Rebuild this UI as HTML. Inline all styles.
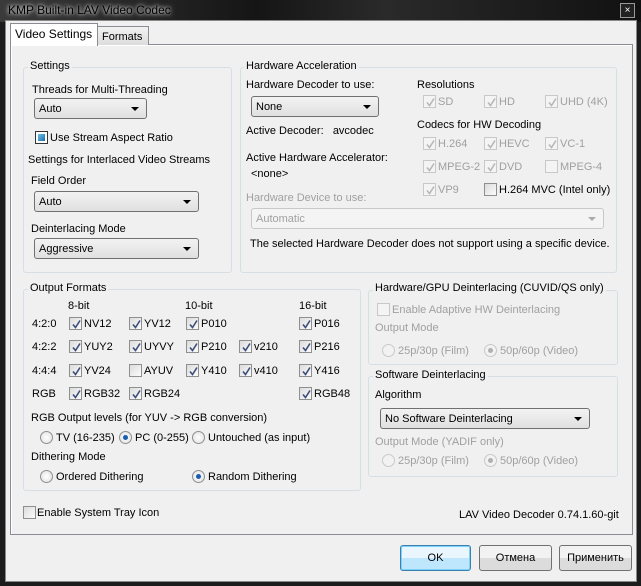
<!DOCTYPE html>
<html><head><meta charset="utf-8"><style>
*{box-sizing:border-box;margin:0;padding:0}
body{width:641px;height:586px;overflow:hidden;background:#1c1c1c;font:11px "Liberation Sans","DejaVu Sans",sans-serif;color:#000;position:relative}
.t{position:absolute;white-space:nowrap;line-height:13px;font-size:11px;margin-top:1px}
.g{color:#a0a0a0}
.box{position:absolute;border:1px solid #d5dfe5;border-radius:3px}
.lg{position:absolute;background:#f0f0f0;padding:0 2px;line-height:13px;font-size:11px;white-space:nowrap;margin-top:0px}
.cb{position:absolute;width:13px;height:13px;border:1px solid #8e8f8f;background:linear-gradient(135deg,#dcdcdc,#fbfbfb)}
.cb.d{border-color:#c8c8c8;background:#f4f4f4}
.cb svg{position:absolute;left:1px;top:1px}
.rb{position:absolute;width:13px;height:13px;border-radius:50%;border:1px solid #8e8f8f;background:radial-gradient(#fff,#dedede)}
.rb.d{border-color:#c8c8c8;background:#f2f2f2}
.rb.on::after{content:"";position:absolute;left:3px;top:3px;width:5px;height:5px;border-radius:50%;background:#1a5db0}
.rb.d.on::after{background:#b0b0b0}
.sel{position:absolute;height:21px;border:1px solid #707070;border-radius:3px;background:linear-gradient(#f2f2f2,#e0e0e0);padding-left:4px;line-height:20px;font-size:11px}
.sel::after{content:"";position:absolute;right:7px;top:8px;border-left:4px solid transparent;border-right:4px solid transparent;border-top:4px solid #000}
.sel.d{border-color:#c8c8c8;background:#f4f4f4;color:#a0a0a0}
.sel.d::after{border-top-color:#aaa}
.btn{position:absolute;height:26px;border:1px solid #707070;border-radius:3px;background:linear-gradient(#f2f2f2 50%,#dcdcdc 50%);text-align:center;line-height:24px;font-size:11px}
</style></head><body>
<div style="position:absolute;left:0;top:0;width:641px;height:22px;background:linear-gradient(90deg,#3a3a3a,#151515 40%,#2a2a2a 60%,#111)"></div>
<div class="t" style="left:8px;top:3px;color:#000;text-shadow:0 0 6px #ddd,0 0 3px #ccc;font-size:12px">KMP Built-in LAV Video Codec</div>
<div style="position:absolute;left:620px;top:3px;width:15px;height:15px;border:1px solid #999;background:#222;color:#fff;font-size:10px;line-height:13px;text-align:center">×</div>
<div style="position:absolute;left:5px;top:20px;width:632px;height:562px;border:1px solid #888;background:#f0f0f0"></div>
<div style="position:absolute;left:10px;top:44px;width:623px;height:491px;border:1px solid #898c95;background:#f0f0f0;box-shadow:inset 1px 1px #fff"></div>
<div style="position:absolute;left:97px;top:26px;width:52px;height:19px;border:1px solid #898c95;border-bottom:none;background:linear-gradient(#f2f2f2,#dcdcdc)"></div>
<div class="t" style="left:102px;top:30px">Formats</div>
<div style="position:absolute;left:10px;top:23px;width:88px;height:23px;border:1px solid #898c95;border-bottom:none;background:#fff"></div>
<div class="t" style="left:15px;top:27px;font-size:12px">Video Settings</div>

<div class="box" style="left:23px;top:67px;width:209px;height:206px"></div>
<div class="lg" style="left:28px;top:60px">Settings</div>
<div class="t" style="left:32px;top:83px">Threads for Multi-Threading</div>
<div class="sel" style="left:34px;top:98px;width:113px">Auto</div>
<div class="cb" style="left:35px;top:131px;border-color:#333;background:#fff"><div style="position:absolute;left:2px;top:2px;width:7px;height:7px;background:linear-gradient(135deg,#6ac0e8,#1f6fa8)"></div></div>
<div class="t" style="left:50px;top:131px">Use Stream Aspect Ratio</div>
<div class="t" style="left:28px;top:153px">Settings for Interlaced Video Streams</div>
<div class="t" style="left:31px;top:174px">Field Order</div>
<div class="sel" style="left:34px;top:191px;width:165px">Auto</div>
<div class="t" style="left:31px;top:222px">Deinterlacing Mode</div>
<div class="sel" style="left:34px;top:238px;width:165px">Aggressive</div>

<div class="box" style="left:240px;top:67px;width:377px;height:206px"></div>
<div class="lg" style="left:244px;top:60px">Hardware Acceleration</div>
<div class="t" style="left:246px;top:78px">Hardware Decoder to use:</div>
<div class="sel" style="left:251px;top:96px;width:128px">None</div>
<div class="t" style="left:246px;top:124px">Active Decoder:&nbsp;&nbsp;&nbsp;avcodec</div>
<div class="t" style="left:246px;top:151px">Active Hardware Accelerator:</div>
<div class="t" style="left:251px;top:167px">&lt;none&gt;</div>
<div class="t g" style="left:246px;top:191px">Hardware Device to use:</div>
<div class="sel d" style="left:251px;top:208px;width:353px">Automatic</div>
<div class="t" style="left:250px;top:237px">The selected Hardware Decoder does not support using a specific device.</div>
<div class="t" style="left:417px;top:78px">Resolutions</div>
<div class="t" style="left:417px;top:118px">Codecs for HW Decoding</div>

<div class="box" style="left:23px;top:289px;width:338px;height:202px"></div>
<div class="lg" style="left:28px;top:282px">Output Formats</div>
<div class="t" style="left:68px;top:299px">8-bit</div>
<div class="t" style="left:185px;top:299px">10-bit</div>
<div class="t" style="left:299px;top:299px">16-bit</div>
<div class="t" style="left:32px;top:317px">4:2:0</div>
<div class="t" style="left:32px;top:340px">4:2:2</div>
<div class="t" style="left:32px;top:364px">4:4:4</div>
<div class="t" style="left:32px;top:387px">RGB</div>
<div class="t" style="left:31px;top:411px">RGB Output levels (for YUV -&gt; RGB conversion)</div>
<div class="t" style="left:31px;top:450px">Dithering Mode</div>

<div class="box" style="left:368px;top:290px;width:250px;height:75px"></div>
<div class="lg" style="left:373px;top:282px">Hardware/GPU Deinterlacing (CUVID/QS only)</div>
<div class="cb d" style="left:377px;top:303px"></div>
<div class="t g" style="left:392px;top:303px">Enable Adaptive HW Deinterlacing</div>
<div class="t g" style="left:375px;top:321px">Output Mode</div>

<div class="box" style="left:368px;top:376px;width:250px;height:101px"></div>
<div class="lg" style="left:373px;top:369px">Software Deinterlacing</div>
<div class="t" style="left:375px;top:388px">Algorithm</div>
<div class="sel" style="left:380px;top:408px;width:210px">No Software Deinterlacing</div>
<div class="t g" style="left:375px;top:435px">Output Mode (YADIF only)</div>

<div class="cb" style="left:23px;top:506px"></div>
<div class="t" style="left:37px;top:506px">Enable System Tray Icon</div>
<div class="t" style="left:459px;top:508px">LAV Video Decoder 0.74.1.60-git</div>

<div class="btn" style="left:400px;top:545px;width:71px;border-color:#3c7fb1;background:linear-gradient(#eaf6fd 50%,#bee6fd 50%);box-shadow:inset 0 0 0 1px #7dd2f8">OK</div>
<div class="btn" style="left:479px;top:545px;width:73px">Отмена</div>
<div class="btn" style="left:559px;top:545px;width:73px">Применить</div>

<div id="dyn"></div>
<script>
var d=document.getElementById('dyn'),h='';
var ck='<svg width="11" height="11"><path d="M2 5.5 L4.5 8.5 L9 1.5" fill="none" stroke="COL" stroke-width="1.6"/></svg>';
function cb(x,y,c,dis,lab){h+='<div class="cb'+(dis?' d':'')+'" style="left:'+x+'px;top:'+(y-6)+'px">'+(c?ck.replace('COL',dis?'#b8b8b8':'#3b4e7a'):'')+'</div>';if(lab)h+='<div class="t'+(dis?' g':'')+'" style="left:'+(x+15)+'px;top:'+(y-6)+'px">'+lab+'</div>';}
function rb(x,y,on,dis,lab){h+='<div class="rb'+(dis?' d':'')+(on?' on':'')+'" style="left:'+x+'px;top:'+(y-6)+'px"></div><div class="t'+(dis?' g':'')+'" style="left:'+(x+16)+'px;top:'+(y-6)+'px">'+lab+'</div>';}
cb(423,101,1,1,'SD');cb(484,101,1,1,'HD');cb(545,101,1,1,'UHD (4K)');
cb(423,143,1,1,'H.264');cb(484,143,1,1,'HEVC');cb(545,143,1,1,'VC-1');
cb(423,166,1,1,'MPEG-2');cb(484,166,1,1,'DVD');cb(545,166,0,1,'MPEG-4');
cb(423,189,1,1,'VP9');cb(484,189,0,0,'H.264 MVC (Intel only)');
var rows=[[323,['NV12','YV12','P010',null,'P016']],[346,['YUY2','UYVY','P210','v210','P216']],[370,['YV24','AYUV','Y410','v410','Y416']],[393,['RGB32','RGB24',null,null,'RGB48']]];
var xs=[69,129,186,239,299];
rows.forEach(function(r){r[1].forEach(function(l,i){if(l)cb(xs[i],r[0],l!='AYUV',0,l);});});
rb(40,437,0,0,'TV (16-235)');rb(119,437,1,0,'PC (0-255)');rb(192,437,0,0,'Untouched (as input)');
rb(40,476,0,0,'Ordered Dithering');rb(192,476,1,0,'Random Dithering');
rb(382,350,0,1,'25p/30p (Film)');rb(484,350,1,1,'50p/60p (Video)');
rb(382,460,0,1,'25p/30p (Film)');rb(484,460,1,1,'50p/60p (Video)');
d.innerHTML=h;
</script>
</body></html>
